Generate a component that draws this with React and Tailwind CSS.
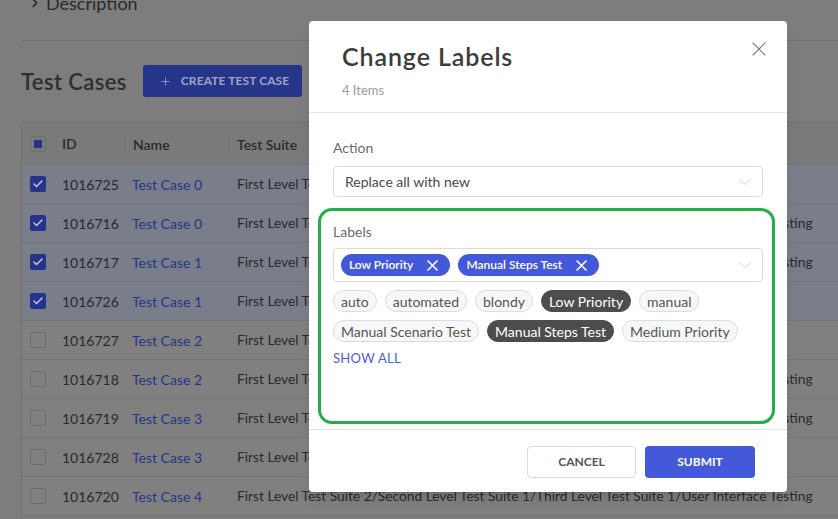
import { X, ChevronDown, ChevronRight, Plus, Check } from "lucide-react";

const LONG = "First Level Test Suite 2/Second Level Test Suite 1/Third Level Test Suite 1/User Interface Testing";
const SHORT = "First Level Test Suite 1/Second Level Test Suite 2";

const rows = [
  { id: "1016725", name: "Test Case 0", on: true, suite: SHORT },
  { id: "1016716", name: "Test Case 0", on: true, suite: LONG },
  { id: "1016717", name: "Test Case 1", on: true, suite: LONG },
  { id: "1016726", name: "Test Case 1", on: true, suite: SHORT },
  { id: "1016727", name: "Test Case 2", on: false, suite: SHORT },
  { id: "1016718", name: "Test Case 2", on: false, suite: LONG },
  { id: "1016719", name: "Test Case 3", on: false, suite: LONG },
  { id: "1016728", name: "Test Case 3", on: false, suite: SHORT },
  { id: "1016720", name: "Test Case 4", on: false, suite: LONG },
];

const tags = [
  { t: "auto" }, { t: "automated" }, { t: "blondy" }, { t: "Low Priority", on: true }, { t: "manual" },
  { t: "Manual Scenario Test" }, { t: "Manual Steps Test", on: true }, { t: "Medium Priority" },
];

function RowCheck({ on }) {
  return on ? (
    <span className="flex h-4 w-4 items-center justify-center rounded-[2px] bg-[#26338a]">
      <Check className="h-3 w-3 text-[#c4c7d6]" strokeWidth={3} />
    </span>
  ) : (
    <span className="block h-4 w-4 rounded-[2px] border border-[#6c6c6c] bg-[#808080]" />
  );
}

function Cross() {
  return (
    <svg width="11" height="11" viewBox="0 0 11 11" className="shrink-0">
      <path d="M1 1L10 10M10 1L1 10" stroke="currentColor" strokeWidth="1.6" strokeLinecap="round" />
    </svg>
  );
}

export default function App() {
  return (
    <div className="relative h-[519px] w-[838px] overflow-hidden bg-[#7d7d7d] font-['Lato',sans-serif] text-[#2a2a2a]">
      {/* dimmed page behind the dialog */}
      <div className="pl-[21px]">
        <div className="mt-[-9px] flex h-6 items-center gap-[4px] pl-[7px] text-[18px]">
          <ChevronRight className="h-[14px] w-[14px]" strokeWidth={3} />
          <span>Description</span>
        </div>
        <div className="mt-[25px] border-t border-[#6e6e6e]" />
        <div className="mt-[24px] flex h-8 items-center gap-[16px]">
          <h1 className="text-[22px] font-semibold tracking-[0.4px] text-[#2e2e2e]">Test Cases</h1>
          <button className="flex h-8 w-[159px] items-center gap-[9px] rounded-[3px] bg-[#263489] pl-[16px] text-[12px] font-bold tracking-[0.1px] text-[#9ea4c8]">
            <Plus className="h-[13px] w-[13px]" strokeWidth={1.5} />
            CREATE TEST CASE
          </button>
        </div>
        <div className="mt-[25px] w-[860px] rounded-tl-[4px] border-l border-t border-[#6f6f6f] bg-[#808080] text-[14px]">
          <div className="flex h-[42px] items-center border-b border-[#727272] bg-[#7a7a7a] font-semibold">
            <div className="w-[33px] pl-[8px]">
              <span className="flex h-4 w-4 items-center justify-center rounded-[2px] border border-[#6c6c6c]">
                <span className="h-2 w-2 bg-[#26338a]" />
              </span>
            </div>
            <div className="w-[69px] pl-[7px]">ID</div>
            <div className="h-5 w-[104px] border-l border-[#737373] pl-[8px]">Name</div>
            <div className="h-5 border-l border-[#737373] pl-[8px]">Test Suite</div>
          </div>
          {rows.map((r) => (
            <div key={r.id} className={`flex h-[39px] items-center border-b border-[#747474] ${r.on ? "bg-[#797e8a]" : ""}`}>
              <div className="w-[33px] pl-[8px]"><RowCheck on={r.on} /></div>
              <div className="w-[69px] pl-[7px]">{r.id}</div>
              <div className="w-[105px] pl-[8px] text-[#273587]">{r.name}</div>
              <div className="whitespace-nowrap pl-[8px] text-[13.75px]">{r.suite}</div>
            </div>
          ))}
        </div>
      </div>

      {/* dialog */}
      <div className="absolute left-[309px] top-[21px] w-[478px] rounded-[4px] bg-white text-[#4a4a4a] shadow-lg">
        <div className="relative h-[92px] border-b border-[#e3e3e3] px-[33px] pt-[20px]">
          <h2 className="text-[25px] font-semibold leading-[30px] tracking-[0.9px] text-[#3c3c3c]">Change Labels</h2>
          <p className="mt-[11px] text-[13px] leading-4 text-[#9b9b9b]">4 Items</p>
          <X className="absolute right-[16px] top-[16px] h-6 w-6 text-[#7a7a7a]" strokeWidth={1.1} />
        </div>

        <div className="px-[24px] pb-[63px] pt-[25px]">
          <p className="text-[14px] leading-5 text-[#6b6b6b]">Action</p>
          <div className="mt-[8px] flex h-[31px] items-center justify-between rounded-[4px] border border-[#dcdcdc] pl-[11px] pr-[7px] text-[14px]">
            <span>Replace all with new</span>
            <ChevronDown className="h-5 w-5 text-[#c6c6c6]" strokeWidth={1} />
          </div>

          <p className="mt-[25px] text-[14px] leading-5 text-[#6b6b6b]">Labels</p>
          <div className="mt-[6px] flex h-[34px] items-center justify-between rounded-[4px] border border-[#dcdcdc] pl-[7px] pr-[7px]">
            <div className="flex gap-[8px]">
              {["Low Priority", "Manual Steps Test"].map((t) => (
                <span key={t} className="flex h-[22px] items-center gap-[14px] rounded-full bg-[#4459d9] pl-[8px] pr-[12px] text-[12px] font-semibold text-white">
                  {t}
                  <Cross />
                </span>
              ))}
            </div>
            <ChevronDown className="h-5 w-5 text-[#c6c6c6]" strokeWidth={1} />
          </div>

          <div className="mt-[8px] flex flex-wrap gap-x-[8px] gap-y-[8px]">
            {tags.map(({ t, on }) => (
              <span key={t} className={`flex h-[22px] items-center rounded-full border px-[7px] text-[14px] ${on ? "border-[#4d4d4d] bg-[#4d4d4d] text-white" : "border-[#dddddd] bg-[#f7f7f7] text-[#555]"}`}>
                {t}
              </span>
            ))}
          </div>
          <p className="mt-[8px] text-[13px] leading-4 tracking-[0.3px] text-[#4a5ed8]">SHOW ALL</p>
        </div>

        <div className="flex justify-end gap-[9px] border-t border-[#e3e3e3] pb-[14px] pr-[32px] pt-[16px] text-[12px] font-bold">
          <button className="h-8 w-[109px] rounded-[4px] border border-[#dcdcdc] text-[#555]">CANCEL</button>
          <button className="h-8 w-[110px] rounded-[4px] bg-[#4459d9] text-white">SUBMIT</button>
        </div>

        {/* highlight around the labels field */}
        <div className="pointer-events-none absolute left-[9px] top-[187px] h-[216px] w-[457px] rounded-[14px] border-[3px] border-[#26ad4b]" />
      </div>
    </div>
  );
}
